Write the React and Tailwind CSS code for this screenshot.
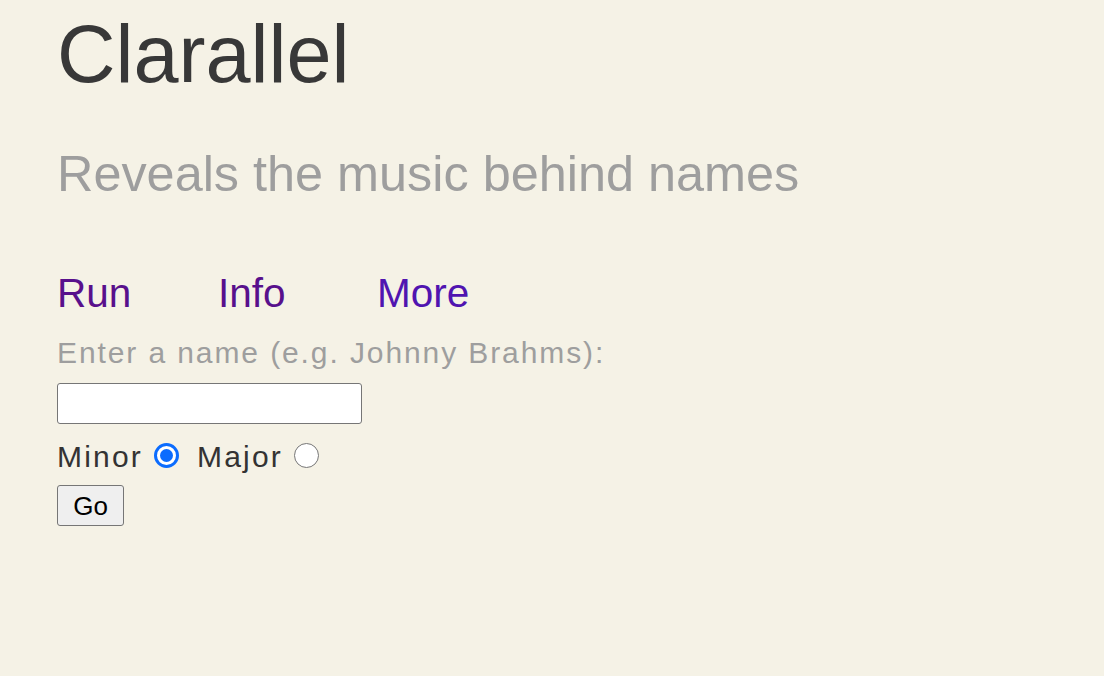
import React, { useState } from 'react';

const Radio = ({ checked, onClick }) => (
  <span
    onClick={onClick}
    className={
      checked
        ? 'flex items-center justify-center w-[25px] h-[25px] rounded-full border-[3px] border-[#0b6cfe] bg-white cursor-pointer'
        : 'flex items-center justify-center w-[25px] h-[25px] rounded-full border-[1.5px] border-[#767676] bg-white cursor-pointer'
    }
  >
    {checked && <span className="w-[13px] h-[13px] rounded-full bg-[#0b6cfe]" />}
  </span>
);

export default function App() {
  const [name, setName] = useState('');
  const [mode, setMode] = useState('minor');

  return (
    <div className="min-h-[676px] w-full bg-[#f5f2e6] font-['Liberation_Sans',Arial,sans-serif] pl-[57px] pt-[14px]">
      <h1 className="text-[81px] leading-[80px] text-[#383838] font-normal">Clarallel</h1>

      <h2 className="mt-[55px] text-[50.4px] leading-[50px] text-[#9e9e9e] font-normal">
        Reveals the music behind names
      </h2>

      <nav className="mt-[74px] flex text-[40.5px] leading-[40px]">
        <a href="#" className="w-[161px] text-[#58108c]">Run</a>
        <a href="#" className="w-[159px] text-[#58108c]">Info</a>
        <a href="#" className="text-[#5014b0]">More</a>
      </nav>

      <label className="block mt-[25px] text-[30px] leading-[29px] tracking-[1.9px] text-[#9e9e9e]">
        Enter a name (e.g. Johnny Brahms):
      </label>

      <input
        type="text"
        value={name}
        onChange={e => setName(e.target.value)}
        className="block mt-[16px] w-[305px] h-[41px] bg-white border-[1.5px] border-[#767676] rounded-[3px] px-2 text-[24px] outline-none"
      />

      <div className="mt-[18px] flex items-center h-[29px] text-[30px] leading-[29px] tracking-[2.2px] text-[#333333]">
        <span>Minor</span>
        <span className="ml-[11px] mt-[-2px]">
          <Radio checked={mode === 'minor'} onClick={() => setMode('minor')} />
        </span>
        <span className="ml-[18px]">Major</span>
        <span className="ml-[11px] mt-[-2px]">
          <Radio checked={mode === 'major'} onClick={() => setMode('major')} />
        </span>
      </div>

      <button className="mt-[14px] w-[67px] h-[41px] bg-[#efefef] border border-[#767676] rounded-[3px] text-[26px] leading-[26px] text-black">
        Go
      </button>
    </div>
  );
}
